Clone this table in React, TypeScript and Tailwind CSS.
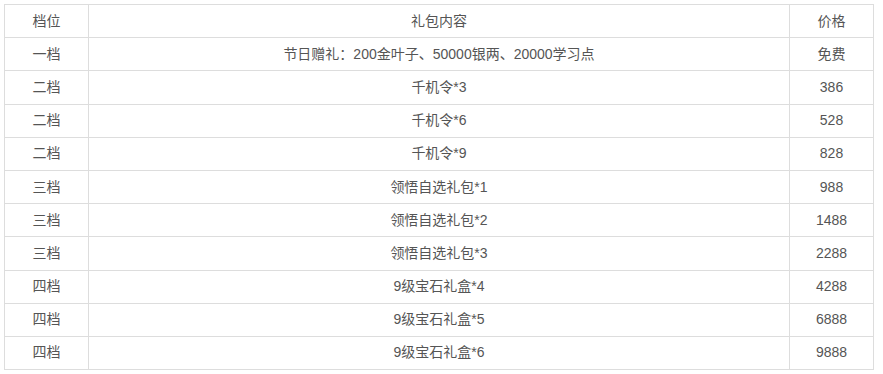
const rows: [string, string, string][] = [
  ['一档', '节日赠礼：200金叶子、50000银两、20000学习点', '免费'],
  ['二档', '千机令*3', '386'],
  ['二档', '千机令*6', '528'],
  ['二档', '千机令*9', '828'],
  ['三档', '领悟自选礼包*1', '988'],
  ['三档', '领悟自选礼包*2', '1488'],
  ['三档', '领悟自选礼包*3', '2288'],
  ['四档', '9级宝石礼盒*4', '4288'],
  ['四档', '9级宝石礼盒*5', '6888'],
  ['四档', '9级宝石礼盒*6', '9888'],
];

const cell = 'border border-[#dddddd] h-[33.2px] p-0 text-center align-middle font-normal';

export default function App() {
  return (
    <div className="bg-white w-[883px] h-[374px] pt-[4px] pl-[4px]">
      <table
        className="w-[870px] border-collapse table-fixed text-[14px] text-[#555555]"
        style={{ fontFamily: '"Liberation Sans", "Noto Sans CJK SC", sans-serif' }}
      >
        <colgroup>
          <col className="w-[84px]" />
          <col />
          <col className="w-[84px]" />
        </colgroup>
        <thead>
          <tr>
            <th className={cell}>档位</th>
            <th className={cell}>礼包内容</th>
            <th className={cell}>价格</th>
          </tr>
        </thead>
        <tbody>
          {rows.map((r, i) => (
            <tr key={i}>
              <td className={cell}>{r[0]}</td>
              <td className={cell}>{r[1]}</td>
              <td className={cell}>{r[2]}</td>
            </tr>
          ))}
        </tbody>
      </table>
    </div>
  );
}
